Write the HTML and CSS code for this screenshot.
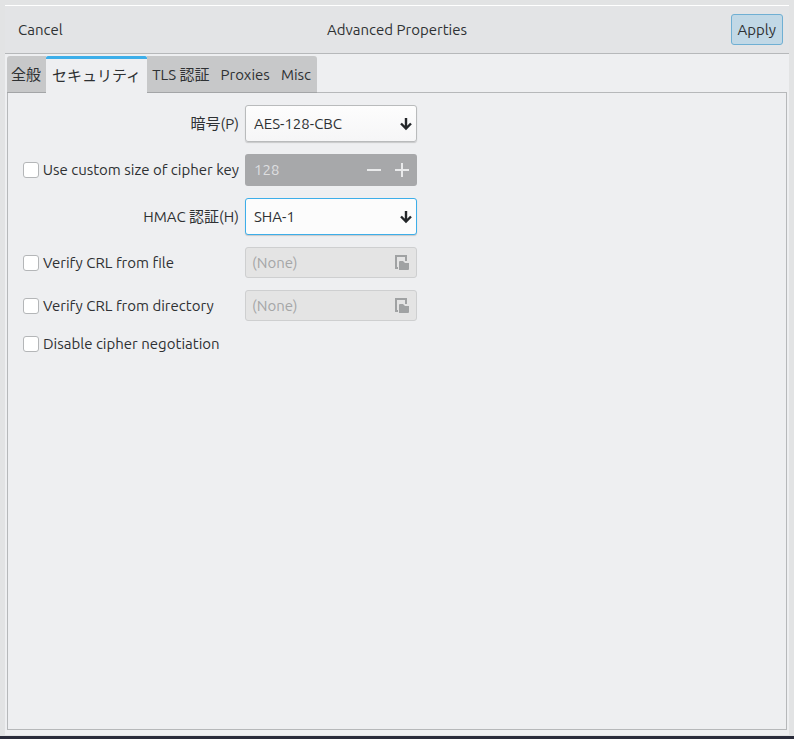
FILE: index.html
```html
<!DOCTYPE html>
<html lang="ja">
<head>
<meta charset="utf-8">
<title>Advanced Properties</title>
<link rel="stylesheet" href="styles.css">
</head>
<body>
<div class="window">
  <header class="header">
    <button type="button" class="btn btn-flat">Cancel</button>
    <h1 class="title">Advanced Properties</h1>
    <button type="button" class="btn btn-apply">Apply</button>
  </header>
  <main class="body">
    <div class="tabs" role="tablist">
      <button type="button" class="tab tab-first" role="tab">全般</button>
      <button type="button" class="tab tab-active" role="tab" aria-selected="true">セキュリティ</button>
      <button type="button" class="tab" role="tab">TLS 認証</button>
      <button type="button" class="tab" role="tab">Proxies</button>
      <button type="button" class="tab tab-last" role="tab">Misc</button>
    </div>
    <form class="panel" role="tabpanel">
      <label class="label" for="cipher">暗号(P)</label>
      <div class="combo">
        <select id="cipher"><option>AES-128-CBC</option></select>
        <svg class="arrow" viewBox="0 0 12 14" aria-hidden="true"><path d="M6 1v11M1 6.500l5 5 5-5"/></svg>
      </div>

      <label class="check"><input type="checkbox">Use custom size of cipher key</label>
      <div class="spin">
        <input type="text" value="128" aria-label="Cipher key size" disabled>
        <button type="button" aria-label="Decrease" disabled><svg viewBox="0 0 14 14"><path d="M0 7h14"/></svg></button>
        <button type="button" aria-label="Increase" disabled><svg viewBox="0 0 14 14"><path d="M0 7h14M7 0v14"/></svg></button>
      </div>

      <label class="label" for="hmac">HMAC 認証(H)</label>
      <div class="combo combo-focus">
        <select id="hmac"><option>SHA-1</option></select>
        <svg class="arrow" viewBox="0 0 12 14" aria-hidden="true"><path d="M6 1v11M1 6.500l5 5 5-5"/></svg>
      </div>

      <label class="check"><input type="checkbox">Verify CRL from file</label>
      <button type="button" class="file" disabled>(None)
        <svg viewBox="0 0 14 15" aria-hidden="true"><path d="M0 0h12v6h-2V2H2v10h1v2H0z"/><path d="M4 15V7q0-1 1-1h3l2 2h4v6q0 1-1 1z"/></svg>
      </button>

      <label class="check"><input type="checkbox">Verify CRL from directory</label>
      <button type="button" class="file" disabled>(None)
        <svg viewBox="0 0 14 15" aria-hidden="true"><path d="M0 0h12v6h-2V2H2v10h1v2H0z"/><path d="M4 15V7q0-1 1-1h3l2 2h4v6q0 1-1 1z"/></svg>
      </button>

      <label class="check check-wide"><input type="checkbox">Disable cipher negotiation</label>
    </form>
  </main>
</div>
</body>
</html>
```
FILE: styles.css
```css
* {
  box-sizing: border-box;
}

body {
  margin: 0;
  background: #e2e3e4;
  border-bottom: 3px solid #292b3a;
  min-height: 100vh;
  display: flex;
  flex-direction: column;
  color: #2e3133;
}

body,
button,
input,
select {
  font-family: "Ubuntu", "Noto Sans", "Noto Sans CJK JP", sans-serif;
  font-size: 15px;
  line-height: 22px;
}

.window {
  flex: 1;
  display: flex;
  flex-direction: column;
  margin: 5px 5px 1px;
  border-top: 1px solid #fff;
}

.header {
  display: grid;
  grid-template-columns: 1fr auto 1fr;
  align-items: center;
  height: 48px;
  padding: 0 6px;
  background: #e3e4e6;
  border-bottom: 1px solid #b6b8ba;
}

.title {
  margin: 0;
  font-size: 15px;
  font-weight: 400;
}

.btn {
  height: 31px;
  padding: 0 6px;
  border: 1px solid transparent;
  border-radius: 3px;
  background: none;
  color: inherit;
}

.btn-flat {
  justify-self: start;
}

.btn-apply {
  justify-self: end;
  border-color: #6fafd3;
  background: #c1d8e6;
}

.body {
  flex: 1;
  display: flex;
  flex-direction: column;
  padding: 2px 2px 5px;
  background: #eeeff1;
}

.tabs {
  position: relative;
  z-index: 1;
  display: flex;
  height: 37px;
  margin-bottom: -1px;
}

.tab {
  padding: 2px 6px 0 5px;
  border: 0;
  border-bottom: 1px solid #a3a5a7;
  background: #c7c8c9;
  color: inherit;
}

.tab-first {
  padding: 2px 5px 0 4px;
  border-radius: 3px 0 0 0;
}

.tab-last {
  border-radius: 0 3px 0 0;
}

.tab-active {
  padding: 0 6px 1px;
  border-top: 3px solid #3daee9;
  border-bottom: 0;
  border-radius: 2px 2px 0 0;
  background: #eeeff1;
}

.panel {
  flex: 1;
  display: grid;
  grid-template-columns: 216px 172px;
  align-content: start;
  align-items: center;
  gap: 12px 6px;
  padding: 12px 15px;
  border: 1px solid #b6b8ba;
}

.label {
  justify-self: end;
}

.check {
  display: flex;
  align-items: center;
  gap: 4px;
  white-space: nowrap;
}

.check-wide {
  grid-column: 1 / -1;
}

.check input {
  appearance: none;
  width: 16px;
  height: 16px;
  margin: 0;
  border: 1px solid #b4b6b8;
  border-radius: 3px;
  background: #fff;
}

.combo {
  position: relative;
}

.combo select {
  appearance: none;
  display: block;
  width: 100%;
  height: 37px;
  padding: 0 24px 0 8px;
  border: 1px solid #b9bbbc;
  border-radius: 3px;
  background: linear-gradient(#fdfdfd, #f6f6f7);
  box-shadow: 0 1px 1px #c8c9ca;
  color: inherit;
}

.combo-focus select {
  border-color: #3daee9;
  background: #fcfcfc;
}

.arrow {
  position: absolute;
  top: 12px;
  right: 5px;
  width: 12px;
  height: 14px;
  fill: none;
  stroke: #232629;
  stroke-width: 2.4;
  pointer-events: none;
}

.spin {
  display: flex;
  align-items: center;
  height: 32px;
  padding-right: 1px;
  border-radius: 3px;
  background: #a7a8aa;
}

.spin input {
  flex: 1;
  min-width: 0;
  padding: 0 9px;
  border: 0;
  background: none;
  color: #dedfe0;
}

.spin button {
  display: grid;
  place-items: center;
  width: 28px;
  height: 32px;
  padding: 0;
  border: 0;
  background: none;
}

.spin svg {
  width: 14px;
  height: 14px;
  fill: none;
  stroke: #e9eaeb;
  stroke-width: 2;
}

.file {
  display: flex;
  align-items: center;
  justify-content: space-between;
  height: 31px;
  padding: 0 7px 0 6px;
  border: 1px solid #cecfd0;
  border-radius: 3px;
  background: #e4e4e4;
  color: #a5a6a7;
}

.file svg {
  width: 14px;
  height: 15px;
  fill: #a0a2a3;
}
```
